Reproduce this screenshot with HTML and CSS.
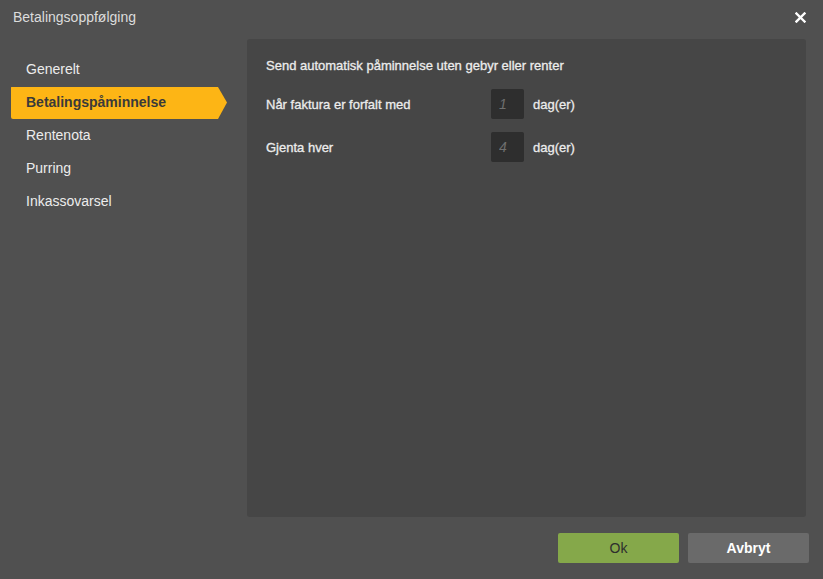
FILE: index.html
```
<!DOCTYPE html>
<html lang="no">
<head>
    <meta charset="UTF-8">
    <meta name="viewport" content="width=device-width, initial-scale=1.0">
    <title>Betalingsoppfølging</title>
    <link rel="stylesheet" href="styles.css">
</head>
<body>
    <div class="dialog">
        <div class="dialog-header">
            <h1 class="dialog-title">Betalingsoppfølging</h1>
            <button class="btn-close" aria-label="Lukk">
                <svg width="11" height="11" viewBox="0 0 11 11">
                    <path d="M1.5 1.5 L9.5 9.5 M9.5 1.5 L1.5 9.5" stroke="#fff" stroke-width="2.4" stroke-linecap="square"/>
                </svg>
            </button>
        </div>

        <div class="dialog-body">
            <ul class="nav-list">
                <li class="nav-item">Generelt</li>
                <li class="nav-item active">Betalingspåminnelse</li>
                <li class="nav-item">Rentenota</li>
                <li class="nav-item">Purring</li>
                <li class="nav-item">Inkassovarsel</li>
            </ul>

            <div class="panel">
                <p class="panel-heading">Send automatisk påminnelse uten gebyr eller renter</p>
                <div class="form-row">
                    <label for="forfalt">Når faktura er forfalt med</label>
                    <input type="text" id="forfalt" placeholder="1">
                    <span class="unit">dag(er)</span>
                </div>
                <div class="form-row">
                    <label for="gjenta">Gjenta hver</label>
                    <input type="text" id="gjenta" placeholder="4">
                    <span class="unit">dag(er)</span>
                </div>
            </div>
        </div>

        <div class="dialog-footer">
            <button class="btn btn-ok">Ok</button>
            <button class="btn btn-cancel">Avbryt</button>
        </div>
    </div>
</body>
</html>
```

FILE: styles.css
```
:root {
    --bg: #505050;
    --panel: #464646;
    --accent: #fdb515;
    --text: #ececec;
}

* {
    margin: 0;
    padding: 0;
    box-sizing: border-box;
    font-family: 'Liberation Sans', Arial, sans-serif;
}

body {
    background: var(--bg);
    width: 823px;
    height: 579px;
    overflow: hidden;
}

.dialog {
    display: flex;
    flex-direction: column;
    height: 100%;
}

.dialog-header {
    height: 39px;
    display: flex;
    align-items: flex-start;
    justify-content: space-between;
    padding: 9px 17px 0 13px;
}

.dialog-title {
    font-size: 14px;
    font-weight: 400;
    color: #dcdcdc;
    line-height: 16px;
}

.btn-close {
    background: none;
    border: none;
    width: 11px;
    height: 11px;
    margin-top: 3px;
    display: flex;
    cursor: pointer;
}

.dialog-body {
    display: flex;
    height: 478px;
}

.nav-list {
    list-style: none;
    width: 247px;
    padding: 14px 0 0 11px;
}

.nav-item {
    height: 33px;
    line-height: 33px;
    padding-left: 15px;
    width: 216px;
    font-size: 14px;
    color: var(--text);
    cursor: pointer;
}

.nav-item.active {
    background: var(--accent);
    color: #3a3a3a;
    font-weight: 700;
    border-radius: 2px;
    clip-path: polygon(0 1px, calc(100% - 9px) 1px, 100% 50%, calc(100% - 9px) 100%, 0 100%);
}

.panel {
    width: 559px;
    background: var(--panel);
    border-radius: 3px;
    padding: 19px 19px;
}

.panel-heading {
    font-size: 13px;
    color: var(--text);
    line-height: 16px;
    margin-bottom: 15px;
    -webkit-text-stroke: 0.3px var(--text);
}

.form-row {
    display: grid;
    grid-template-columns: 216px 33px auto;
    column-gap: 9px;
    align-items: center;
    margin-bottom: 13px;
}

.form-row label,
.unit {
    font-size: 13px;
    color: var(--text);
    -webkit-text-stroke: 0.3px var(--text);
}

.form-row input {
    width: 33px;
    height: 30px;
    background: #2e2e2e;
    border: none;
    border-radius: 2px;
    padding-left: 8px;
    font-size: 14px;
    font-style: italic;
    color: #bbb;
    outline: none;
}

.form-row input::placeholder {
    color: #6f6f6f;
}

.dialog-footer {
    display: flex;
    justify-content: flex-end;
    gap: 9px;
    padding: 16px 14px 0 0;
}

.btn {
    width: 121px;
    height: 30px;
    border: none;
    border-radius: 2px;
    font-size: 14px;
    cursor: pointer;
}

.btn-ok {
    background: #85a84a;
    color: #2e2e2e;
}

.btn-cancel {
    background: #6a6a6a;
    color: #fff;
    font-weight: 700;
}
```
